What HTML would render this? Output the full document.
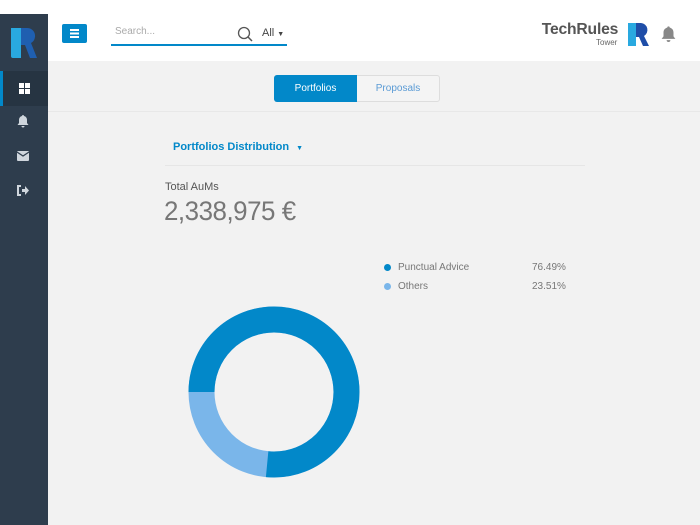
<!DOCTYPE html>
<html><head><style>
*{margin:0;padding:0;box-sizing:border-box}
body{width:700px;height:525px;overflow:hidden;background:#f2f2f2;font-family:"Liberation Sans",sans-serif;position:relative}
.header{position:absolute;left:0;top:0;width:700px;height:61px;background:#fff}
.side{position:absolute;left:0;top:14px;width:48px;height:511px;background:#2e3d4d}
.act{position:absolute;left:0;top:57px;width:48px;height:35px;background:#263442}
.act:before{content:"";position:absolute;left:0;top:0;width:3px;height:35px;background:#0288c9}
.abs{position:absolute}
</style></head><body>
<div class="header"></div>
<div class="side">
  <svg class="abs" style="left:9px;top:12px" width="30" height="34" viewBox="0 0 30 34"><path d="M2 2h10v30H4a2 2 0 0 1-2-2z" fill="#29a9e0"/><path d="M12 2h6a8 8 0 0 1 4 15l6 15h-7l-5-13h-4z" fill="#1f5fb0"/></svg>
  <div class="act"></div>
  <svg class="abs" style="left:19px;top:69px" width="11" height="11"><rect x="0" y="0" width="5" height="5" fill="#fff"/><rect x="6" y="0" width="5" height="5" fill="#fff"/><rect x="0" y="6" width="5" height="5" fill="#fff"/><rect x="6" y="6" width="5" height="5" fill="#fff"/></svg>
  <svg class="abs" style="left:17px;top:101px" width="12" height="13" viewBox="0 0 12 13"><path d="M6 0a1 1 0 0 1 1 1c2 .5 3 2 3 4v3l1.5 2H.5L2 8V5c0-2 1-3.5 3-4a1 1 0 0 1 1-1zM4.5 11h3a1.5 1.5 0 0 1-3 0z" fill="#cfd6dd"/></svg>
  <svg class="abs" style="left:17px;top:137px" width="12" height="10"><rect width="12" height="10" rx="1" fill="#cfd6dd"/><path d="M0 1l6 4 6-4" stroke="#2e3d4d" fill="none" stroke-width="1.2"/></svg>
  <svg class="abs" style="left:17px;top:171px" width="12" height="11"><path d="M4 1H1v9h3" stroke="#cfd6dd" stroke-width="2" fill="none"/><path d="M5 4h3V1l4 4.5L8 10V7H5z" fill="#cfd6dd"/></svg>
</div>
<div class="abs" style="left:62px;top:24px;width:25px;height:19px;background:#0288c9;border-radius:2px"><svg class="abs" style="left:8px;top:5px" width="9" height="9"><rect y="0" width="9" height="2" fill="#fff"/><rect y="3.5" width="9" height="2" fill="#fff"/><rect y="7" width="9" height="2" fill="#fff"/></svg></div>
<div class="abs" style="left:115px;top:26px;font-size:10px;color:#aaa">Search...</div>
<svg class="abs" style="left:237px;top:26px" width="16" height="16"><circle cx="7" cy="7" r="5.5" stroke="#555" stroke-width="1.3" fill="none"/><path d="M11 11l4 4" stroke="#555" stroke-width="1.5"/></svg>
<div class="abs" style="left:262px;top:27px;font-size:11px;color:#444">All <span style="font-size:7px">▼</span></div>
<div class="abs" style="left:111px;top:44px;width:176px;height:2px;background:#0288c9"></div>
<div class="abs" style="left:541px;top:21px;font-size:16px;font-weight:bold;color:#555;letter-spacing:-.2px;transform:scaleX(0.98)">TechRules</div>
<div class="abs" style="left:596px;top:38px;font-size:8px;color:#666">Tower</div>
<svg class="abs" style="left:627px;top:22px" width="24" height="25" viewBox="0 0 24 25"><path d="M1 1h8v23H1z" fill="#29a9e0"/><path d="M9 1h5a7 7 0 0 1 3 13l5 10h-6l-4-9H9z" fill="#1f4ea8"/></svg>
<svg class="abs" style="left:661px;top:26px" width="15" height="17" viewBox="0 0 12 13"><path d="M6 0a1 1 0 0 1 1 1c2 .5 3 2 3 4v3l1.5 2H.5L2 8V5c0-2 1-3.5 3-4a1 1 0 0 1 1-1zM4.5 11h3a1.5 1.5 0 0 1-3 0z" fill="#888"/></svg>
<div class="abs" style="left:274px;top:75px;width:166px;height:27px;border:1px solid #ddd;border-radius:3px;background:#f4f4f4;font-size:10px"><div class="abs" style="left:-1px;top:-1px;width:83px;height:27px;background:#0288c9;border-radius:3px 0 0 3px;color:#fff;text-align:center;line-height:27px">Portfolios</div><div class="abs" style="left:82px;top:0;width:82px;height:25px;text-align:center;line-height:25px;color:#5b9bd5">Proposals</div></div>
<div class="abs" style="left:48px;top:111px;width:652px;height:1px;background:#e8e8e8"></div>
<div class="abs" style="left:173px;top:141px;font-size:11px;color:#0288c9;font-weight:bold">Portfolios Distribution <span style="font-size:7px;margin-left:4px">▼</span></div>
<div class="abs" style="left:165px;top:165px;width:420px;height:1px;background:#e6e6e6"></div>
<div class="abs" style="left:165px;top:181px;font-size:11px;color:#555">Total AuMs</div>
<div class="abs" style="left:164px;top:196px;font-size:27px;color:#777;letter-spacing:-0.5px;transform:scaleX(0.96);transform-origin:left">2,338,975 €</div>
<div class="abs" style="left:384px;top:264px;width:7px;height:7px;border-radius:50%;background:#0288c9"></div>
<div class="abs" style="left:398px;top:262px;font-size:10px;color:#777">Punctual Advice</div>
<div class="abs" style="left:532px;top:262px;font-size:10px;color:#777">76.49%</div>
<div class="abs" style="left:384px;top:283px;width:7px;height:7px;border-radius:50%;background:#7ab6ea"></div>
<div class="abs" style="left:398px;top:281px;font-size:10px;color:#777">Others</div>
<div class="abs" style="left:532px;top:281px;font-size:10px;color:#777">23.51%</div>
<svg class="abs" style="left:0;top:0" width="700" height="525"><g transform="rotate(180 274 392)"><circle cx="274" cy="392" r="72.5" fill="none" stroke="#7ab6ea" stroke-width="26"/><circle cx="274" cy="392" r="72.5" fill="none" stroke="#0288c9" stroke-width="26" stroke-dasharray="348.4 500"/></g></svg>
</body></html>
